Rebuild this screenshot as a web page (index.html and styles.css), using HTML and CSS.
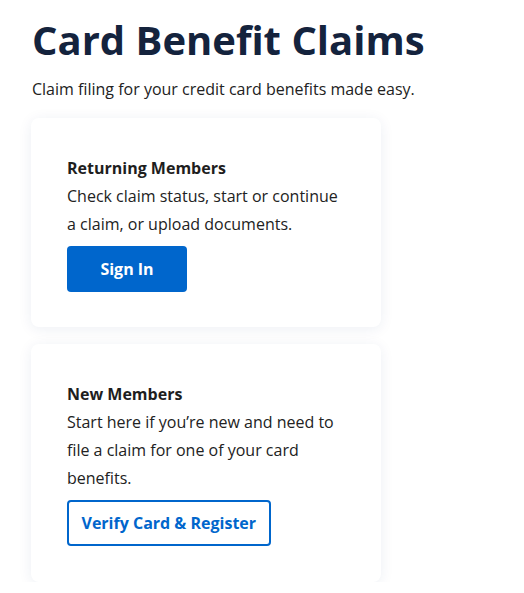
FILE: index.html
```html
<!DOCTYPE html>
<html lang="en">
<head>
<meta charset="utf-8">
<title>Card Benefit Claims</title>
<link rel="stylesheet" href="styles.css">
</head>
<body>
<main class="page">
  <h1 class="title">Card Benefit Claims</h1>
  <p class="subtitle">Claim filing for your credit card benefits made easy.</p>
  <section class="card">
    <h2 class="card-heading">Returning Members</h2>
    <p class="card-text">Check claim status, start or continue a claim, or upload documents.</p>
    <a class="btn btn-primary" href="#">Sign In</a>
  </section>
  <section class="card card-new">
    <h2 class="card-heading">New Members</h2>
    <p class="card-text">Start here if you’re new and need to file a claim for one of your card benefits.</p>
    <a class="btn btn-outline" href="#">Verify Card &amp; Register</a>
  </section>
</main>
</body>
</html>
```
FILE: styles.css
```css
* { box-sizing: border-box; }
html, body { margin: 0; padding: 0; background: #ffffff; }
body {
  font-family: "Open Sans", "Noto Sans", sans-serif;
  color: #222222;
}
.page {
  padding: 12px 0 0 31px;
  display: flex;
  flex-direction: column;
  align-items: flex-start;
}
.title {
  margin: 0 0 0 1px;
  font-size: 40px;
  line-height: 56px;
  font-weight: 700;
  color: #14233d;
  white-space: nowrap;
}
.subtitle {
  margin: 10px 0 0 1px;
  font-size: 16px;
  line-height: 22px;
  color: #222222;
  white-space: nowrap;
}
.card {
  margin-top: 18px;
  width: 350px;
  background: #ffffff;
  border-radius: 8px;
  box-shadow: 0 2px 14px rgba(30, 50, 120, 0.08);
  padding: 36px 36px 35px;
  display: flex;
  flex-direction: column;
  align-items: flex-start;
}
.card-new { margin-top: 17px; padding-bottom: 36px; }
.card-heading {
  margin: 0;
  font-size: 16px;
  line-height: 28px;
  font-weight: 700;
  color: #1e1e1e;
}
.card-text {
  margin: 0;
  font-size: 16px;
  line-height: 28px;
  color: #222222;
}
.btn {
  margin-top: 8px;
  height: 46px;
  display: inline-flex;
  align-items: center;
  justify-content: center;
  font-size: 16px;
  font-weight: 700;
  text-decoration: none;
  border-radius: 4px;
}
.btn-primary {
  width: 120px;
  background: #0066cc;
  color: #ffffff;
}
.btn-outline {
  padding: 0 12.5px;
  border: 2px solid #0066cc;
  color: #0066cc;
  background: #ffffff;
}
```
